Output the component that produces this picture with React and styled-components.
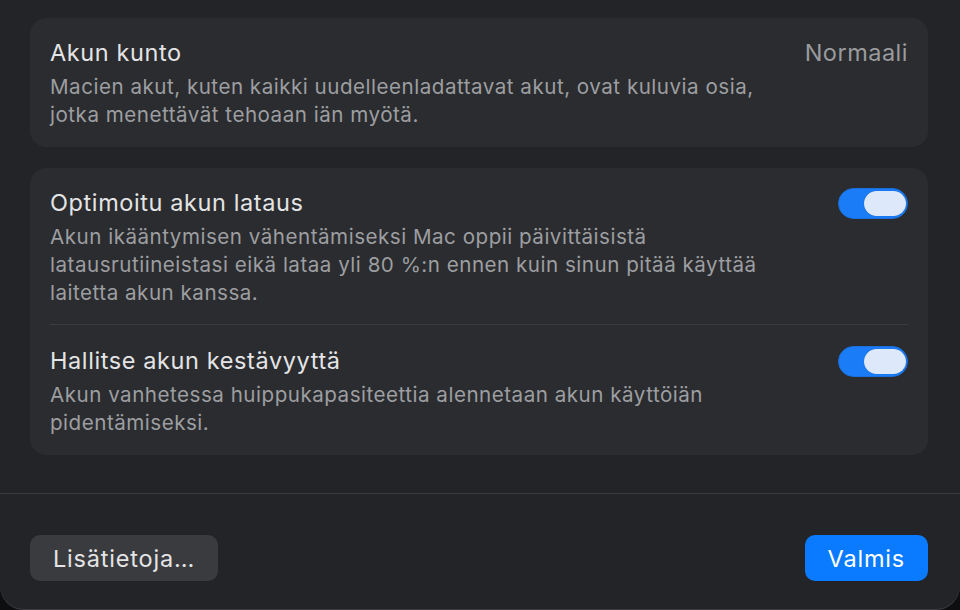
import React from 'react'
import styled, { createGlobalStyle } from 'styled-components'

const Global = createGlobalStyle`
  html, body { margin: 0; padding: 0; background: #0d0e10; }
  body { font-family: Inter, "Noto Sans", "DejaVu Sans", sans-serif; -webkit-font-smoothing: antialiased; }
`

const Window = styled.div`
  width: 960px;
  height: 610px;
  box-sizing: border-box;
  background: #222427;
  border-radius: 0 0 24px 24px;
  box-shadow: inset 0 -1px 0 #3a3b3e;
  display: flex;
  flex-direction: column;
  overflow: hidden;
`

const Content = styled.div`
  padding: 18px 32px 0 30px;
  display: flex;
  flex-direction: column;
  gap: 21px;
`

const Card = styled.div`
  background: #2a2c2f;
  border-radius: 16px;
  padding: 0 20px;
  display: flex;
  flex-direction: column;
`

const Row = styled.div`
  display: flex;
  align-items: flex-start;
  gap: 20px;
  padding: ${p => p.$pad};
`

const Texts = styled.div`
  flex: 1;
  display: flex;
  flex-direction: column;
  gap: 6px;
`

const Title = styled.div`
  font-size: 23.5px;
  letter-spacing: 0.6px;
  line-height: 28px;
  color: #e4e4e6;
  margin-top: 1px;
`

const Desc = styled.div`
  font-size: 20.6px;
  letter-spacing: 0.5px;
  line-height: 28px;
  color: #9d9ea1;
`

const Value = styled.div`
  font-size: 23.5px;
  letter-spacing: 0.5px;
  line-height: 28px;
  color: #9a9b9e;
  margin-top: 1px;
`

const Divider = styled.div`
  height: 1px;
  background: #3a3c3f;
`

const Toggle = styled.div`
  width: 70px;
  height: 31px;
  flex-shrink: 0;
  box-sizing: border-box;
  border-radius: 16px;
  background: #1a7cf6;
  border: 1px solid #1a6fdc;
  display: flex;
  align-items: center;
  justify-content: flex-end;
  padding: 0 1px;
`

const Knob = styled.div`
  width: 42px;
  height: 25px;
  border-radius: 13px;
  background: #dde8fa;
  box-shadow: 0 0 1px rgba(0, 0, 0, 0.3);
`

const Footer = styled.div`
  margin-top: auto;
  border-top: 1px solid #3a3b3e;
  height: 117px;
  box-sizing: border-box;
  padding: 41px 32px 0 30px;
  display: flex;
  justify-content: space-between;
  align-items: flex-start;
`

const Button = styled.button`
  height: 46px;
  padding: 0 23px;
  border: none;
  border-radius: 10px;
  font-family: inherit;
  font-size: 23.5px;
  letter-spacing: 0.8px;
  color: ${p => (p.$primary ? '#ffffff' : '#e4e4e6')};
  background: ${p => (p.$primary ? '#0a7bff' : '#3a3b3e')};
`

export default function App() {
  return (
    <>
      <Global />
      <Window>
        <Content>
          <Card>
            <Row $pad="20px 0 18px">
              <Texts>
                <Title>Akun kunto</Title>
                <Desc>
                  Macien akut, kuten kaikki uudelleenladattavat akut, ovat kuluvia osia,
                  <br />
                  jotka menettävät tehoaan iän myötä.
                </Desc>
              </Texts>
              <Value>Normaali</Value>
            </Row>
          </Card>
          <Card>
            <Row $pad="20px 0 17px">
              <Texts>
                <Title>Optimoitu akun lataus</Title>
                <Desc>
                  Akun ikääntymisen vähentämiseksi Mac oppii päivittäisistä
                  <br />
                  latausrutiineistasi eikä lataa yli 80 %:n ennen kuin sinun pitää käyttää
                  <br />
                  laitetta akun kanssa.
                </Desc>
              </Texts>
              <Toggle><Knob /></Toggle>
            </Row>
            <Divider />
            <Row $pad="21px 0 18px">
              <Texts>
                <Title>Hallitse akun kestävyyttä</Title>
                <Desc>
                  Akun vanhetessa huippukapasiteettia alennetaan akun käyttöiän
                  <br />
                  pidentämiseksi.
                </Desc>
              </Texts>
              <Toggle><Knob /></Toggle>
            </Row>
          </Card>
        </Content>
        <Footer>
          <Button>Lisätietoja…</Button>
          <Button $primary>Valmis</Button>
        </Footer>
      </Window>
    </>
  )
}
